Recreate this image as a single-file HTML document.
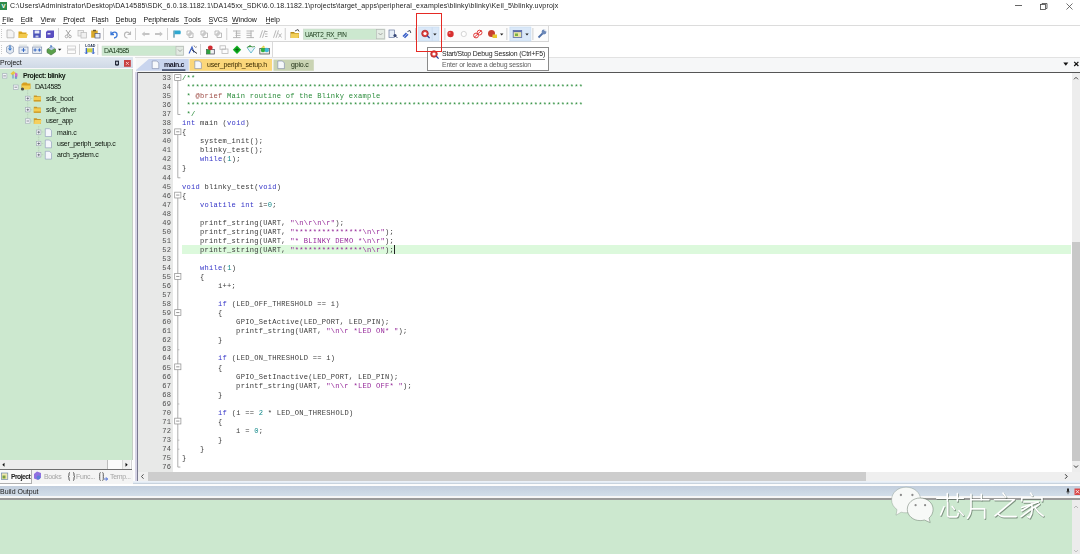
<!DOCTYPE html>
<html><head><meta charset="utf-8">
<style>
*{margin:0;padding:0;box-sizing:border-box}
html,body{width:1080px;height:554px;overflow:hidden;background:#fff}
body{position:relative;font-family:"Liberation Sans",sans-serif;color:#000}
.a{position:absolute}
.ui{will-change:transform;font-family:"Liberation Sans",sans-serif;font-size:6.9px;line-height:8px;white-space:nowrap}
#title{left:10.4px;top:2.1px;color:#1a1a1a;font-size:7px;letter-spacing:0.167px}
.menu > span{position:absolute;top:16.2px;font-size:7px;color:#111}
.u{position:relative}.u::after{content:"";position:absolute;left:0.2px;right:0.2px;top:7.2px;height:0.7px;background:#666}
pre{will-change:transform;font-family:"Liberation Mono",monospace;font-size:7.1px;letter-spacing:0.253px;line-height:9.04px;margin:0}
.c{color:#2a8c3a}
.d{color:#a0504a}
.k{color:#3636c8}
.s{color:#962a9a}
.n{color:#138a8a}
.sep{position:absolute;width:1px;background:#c8c8c8}
</style></head><body>

<!-- title bar -->
<div class="a" style="left:0;top:2px;width:7px;height:8px;background:#2e8b4a"></div>
<div class="a" style="left:1.5px;top:3px;width:4px;height:6px;color:#fff;font-size:6px;line-height:6px;font-weight:bold;font-family:'Liberation Sans'">V</div>
<div id="title" class="a ui">C:\Users\Administrator\Desktop\DA14585\SDK_6.0.18.1182.1\DA145xx_SDK\6.0.18.1182.1\projects\target_apps\peripheral_examples\blinky\blinky\Keil_5\blinky.uvprojx</div>
<!-- window controls -->
<div class="a" style="left:1015px;top:5.3px;width:6.8px;height:0.8px;background:#666"></div>
<svg class="a" style="left:1040px;top:2.5px" width="8" height="7"><rect x="0.5" y="1.5" width="5" height="5" fill="none" stroke="#444" stroke-width="0.8"/><path d="M2 1.5V0.5h5v5h-1" fill="none" stroke="#444" stroke-width="0.8"/></svg>
<svg class="a" style="left:1066px;top:2.5px" width="8" height="7"><path d="M0.5 0.5L6.5 6.5M6.5 0.5L0.5 6.5" stroke="#444" stroke-width="0.75"/></svg>

<!-- menu -->
<div class="menu ui">
<span style="left:2.3px"><span class="u">F</span>ile</span>
<span style="left:20.7px"><span class="u">E</span>dit</span>
<span style="left:40.4px"><span class="u">V</span>iew</span>
<span style="left:63.2px"><span class="u">P</span>roject</span>
<span style="left:91.5px">Fl<span class="u">a</span>sh</span>
<span style="left:115.5px"><span class="u">D</span>ebug</span>
<span style="left:143.6px">Pe<span class="u">r</span>ipherals</span>
<span style="left:184px"><span class="u">T</span>ools</span>
<span style="left:208.5px"><span class="u">S</span>VCS</span>
<span style="left:232px"><span class="u">W</span>indow</span>
<span style="left:265.4px"><span class="u">H</span>elp</span>
</div>
<div class="a" style="left:0;top:25px;width:1080px;height:1px;background:#dcdcdc"></div>

<!-- toolbar 1 -->
<div class="a" style="left:0;top:26px;width:549px;height:15.5px;background:#fcfcfc;border-right:1px solid #dadada"></div>
<div class="a" style="left:0;top:41px;width:549px;height:1px;background:#d6d6d6"></div>
<!-- toolbar 2 -->
<div class="a" style="left:0;top:42px;width:273px;height:15px;background:#fcfcfc;border-right:1px solid #dadada"></div>

<svg class="a" style="left:0;top:0" width="560" height="60" viewBox="0 0 560 60">
<!-- grippers -->
<g fill="#cacaca"><rect x="1" y="29" width="1" height="1"/><rect x="1" y="31" width="1" height="1"/><rect x="1" y="33" width="1" height="1"/><rect x="1" y="35" width="1" height="1"/><rect x="1" y="37" width="1" height="1"/>
<rect x="1" y="45" width="1" height="1"/><rect x="1" y="47" width="1" height="1"/><rect x="1" y="49" width="1" height="1"/><rect x="1" y="51" width="1" height="1"/><rect x="1" y="53" width="1" height="1"/></g>
<!-- separators tb1 -->
<g fill="#c4c4c4">
<rect x="58" y="28" width="0.8" height="12"/><rect x="103" y="28" width="0.8" height="12"/><rect x="135" y="28" width="0.8" height="12"/><rect x="167.2" y="28" width="0.8" height="12"/><rect x="226.4" y="28" width="0.8" height="12"/><rect x="284.8" y="28" width="0.8" height="12"/><rect x="415.2" y="28" width="0.8" height="12"/><rect x="444.5" y="28" width="0.8" height="12"/><rect x="506.5" y="28" width="0.8" height="12"/><rect x="532.5" y="28" width="0.8" height="12"/>
<rect x="79.2" y="44" width="0.8" height="11"/><rect x="97.4" y="44" width="0.8" height="11"/><rect x="200.2" y="44" width="0.8" height="11"/>
</g>
<!-- TB1 icons -->
<!-- new -->
<path d="M7 30h4.5l2.5 2.5v5.3H7z" fill="#f4f4f4" stroke="#a8a8a8" stroke-width="0.7"/>
<!-- open -->
<path d="M18.5 31.5h3l1 1h4v5.5h-8z" fill="#d9a520"/><path d="M19.5 34h8.5l-1.5 4h-7.5z" fill="#f2c94c"/>
<!-- save -->
<rect x="33.2" y="30" width="7.6" height="7.8" fill="#4a52b8"/><rect x="34.6" y="30.5" width="4.8" height="3" fill="#e8ecf8"/><rect x="35.5" y="35.5" width="3" height="2" fill="#c8cce8"/>
<!-- save all -->
<path d="M47.5 30.5h6.5v6.5l-1.5 1h-6.5v-6z" fill="#5a4ec0"/><rect x="47.5" y="33" width="3" height="1.5" fill="#e0e0f4"/>
<!-- cut -->
<path d="M66 30l3.5 5M70.5 30l-3.5 5" stroke="#9a9a9a" stroke-width="0.9"/><circle cx="66.5" cy="36.5" r="1.3" fill="none" stroke="#9a9a9a" stroke-width="0.8"/><circle cx="70" cy="36.5" r="1.3" fill="none" stroke="#9a9a9a" stroke-width="0.8"/>
<!-- copy -->
<rect x="78" y="30.5" width="5.5" height="5.5" fill="#f0f0f0" stroke="#b8b8b8" stroke-width="0.7"/><rect x="81" y="32.5" width="5.5" height="5.5" fill="#f0f0f0" stroke="#b8b8b8" stroke-width="0.7"/>
<!-- paste -->
<rect x="91.2" y="30.5" width="6.5" height="7.2" fill="#d9a828"/><rect x="93" y="29.8" width="3" height="1.5" fill="#6a5a30"/><rect x="95" y="33.5" width="5" height="4.5" fill="#e8eef6" stroke="#505878" stroke-width="0.7"/>
<!-- undo -->
<path d="M111 31.5v3h3M111.5 34.2c1.5-3 6-3 5.5 1.5 -0.5 2 -2 2.3 -3 2.3" fill="none" stroke="#3a78d8" stroke-width="1.3"/>
<!-- redo -->
<path d="M130.5 31.5v3h-3M130 34.2c-1.5-3 -6-3 -5.5 1.5 0.5 2 2 2.3 3 2.3" fill="none" stroke="#b8b8b8" stroke-width="1.1"/>
<!-- back / fwd -->
<path d="M141.7 34l3-2.5v1.6h4.8v1.8h-4.8v1.6z" fill="#c4c4c4"/><path d="M162.8 34l-3-2.5v1.6h-4.8v1.8h4.8v1.6z" fill="#c4c4c4"/>
<!-- bookmark flag -->
<path d="M174 30.5v7.2" stroke="#1a6c8c" stroke-width="1"/><path d="M174.5 30.5h5.5c1 0 1 3.8 0 3.8h-5.5z" fill="#2ea8d0"/>
<!-- gray bookmarks -->
<g fill="none" stroke="#b4b4b4" stroke-width="0.9"><path d="M187 31h4v4h-4zM189 33h4v4.5h-4z"/><path d="M201 31h4v4h-4zM203 33h4.5v4.5h-4.5z"/><path d="M215 31h4v4h-4zM217 33h4.5v4.5h-4.5z"/></g>
<!-- indent / unindent -->
<g stroke="#b0b0b0" stroke-width="0.9"><path d="M233 31h7.5M235.5 33.2h5M235.5 35.4h5M233 37.6h7.5M236.5 30.5v7.5"/><path d="M246.5 31h7.5M246.5 33.2h5M246.5 35.4h5M246.5 37.6h7.5M251 30.5v7.5"/></g>
<!-- comment // -->
<g stroke="#b0b0b0" stroke-width="0.9"><path d="M260 37.8l2.5-7.5M262.5 37.8l2.5-7.5M265 31.5h2.5M265 34h2.5M265 36.5h2.5"/><path d="M273.5 37.8l2.5-7.5M276 37.8l2.5-7.5M278.5 33.5l3 4M281.5 33.5l-3 4"/></g>
<!-- folder -->
<path d="M290.5 32h3.5l1 1h4v5h-8.5z" fill="#b88a18"/><path d="M291 33.5h8l-0.5 4.5h-7.5z" fill="#f2cf5a"/><path d="M295 31l3-1.5 1 2" fill="none" stroke="#303030" stroke-width="0.8"/>
<!-- combobox UART2 -->
<rect x="303.3" y="29" width="81.7" height="10.4" fill="#cce8cf" stroke="#c8d4c8" stroke-width="0.5"/>
<rect x="376.5" y="29.6" width="8" height="9.2" fill="#e4ece4" stroke="#b4b4b4" stroke-width="0.6"/>
<path d="M378.5 33l2 2 2-2" fill="none" stroke="#8a8a8a" stroke-width="0.7"/>
<!-- doc magnifier -->
<rect x="389" y="30" width="5.5" height="7.5" fill="#e6eef8" stroke="#6a7aa0" stroke-width="0.7"/><circle cx="395" cy="35.5" r="1.6" fill="#384878"/><path d="M396 36.5l1.3 1.3" stroke="#203060" stroke-width="1"/>
<!-- arrows -->
<path d="M403 36.5l3.5-3.5M404.5 37.8l3.5-3.5" stroke="#3a60c8" stroke-width="1.6"/><path d="M407.5 31.5l2.5-1 0.8 2.5" fill="none" stroke="#303848" stroke-width="0.9"/>
<!-- debug button highlight -->
<rect x="418.6" y="27" width="20.4" height="14" fill="#dae8f8" stroke="#c4daf2" stroke-width="0.6"/>
<rect x="431.8" y="27.3" width="0.6" height="13.4" fill="#c0d4ec"/>
<circle cx="425" cy="33.5" r="3.3" fill="#e04040" stroke="#a02020" stroke-width="0.7"/><circle cx="425" cy="33.5" r="1.6" fill="#fff"/><path d="M427.3 35.8l2.3 2.3" stroke="#2a3a98" stroke-width="1.3"/>
<path d="M433.2 33.6h3.4l-1.7 2z" fill="#222"/>
<!-- red circle -->
<circle cx="450.5" cy="34" r="3.2" fill="#d83030"/><circle cx="449.6" cy="33" r="1" fill="#f08080"/>
<!-- hollow circle -->
<circle cx="463.8" cy="34" r="2.6" fill="#fff" stroke="#c4c4c4" stroke-width="0.7"/>
<!-- chain -->
<g fill="none" stroke="#e03a3a" stroke-width="1"><circle cx="476" cy="35.5" r="2.4"/><circle cx="479.6" cy="32.6" r="2.4"/><path d="M474 37.5l7.5-7"/></g>
<!-- bug -->
<circle cx="491.5" cy="33.5" r="3.5" fill="#c84030"/><rect x="492.5" y="34.5" width="4.5" height="3.5" fill="#e8c830"/><path d="M500 33.6h3.4l-1.7 2z" fill="#222"/>
<!-- window highlight -->
<rect x="509.9" y="27" width="21" height="14" fill="#dae8f8" stroke="#c4daf2" stroke-width="0.6"/>
<rect x="513.2" y="30.5" width="8.5" height="7" fill="#e8e4a8" stroke="#5a6aa8" stroke-width="0.8"/><rect x="513.2" y="30.5" width="8.5" height="1.6" fill="#5a6aa8"/><rect x="515" y="33.5" width="3" height="2.5" fill="#7ab040"/>
<path d="M525.3 33.6h3.4l-1.7 2z" fill="#222"/>
<!-- wrench -->
<path d="M538.5 37.5l4.5-4.5" stroke="#5070a8" stroke-width="1.8"/><circle cx="544" cy="32" r="2.4" fill="#6c88b8"/><path d="M544.3 29.6l1.5 1.6" stroke="#f9f9f9" stroke-width="1.1"/>

<!-- TB2 icons -->
<path d="M6.5 47l3.5-2 3.5 2v5l-3.5 2-3.5-2z" fill="#dfe6f0" stroke="#8898b0" stroke-width="0.7"/><path d="M10 45.5v4.5" stroke="#2a70c8" stroke-width="1.2"/><path d="M8.5 48.5l1.5 1.8 1.5-1.8" fill="none" stroke="#2a70c8" stroke-width="0.9"/>
<rect x="19" y="47" width="9" height="6.5" fill="#e6ecf4" stroke="#7a8aa8" stroke-width="0.7"/><path d="M20 46v-1.5M22 46v-1.5M24 46v-1.5M26 46v-1.5" stroke="#9aa" stroke-width="0.5"/><path d="M21.5 50h4M23.5 48v4" stroke="#2a60c0" stroke-width="0.9"/>
<rect x="32.7" y="47" width="9" height="6.5" fill="#e6ecf4" stroke="#7a8aa8" stroke-width="0.7"/><path d="M34 46v-1.5M36 46v-1.5M38 46v-1.5M40 46v-1.5" stroke="#9aa" stroke-width="0.5"/><path d="M33.5 50h3.2M35.1 48.4v3.2M37.8 50h3.2M39.4 48.4v3.2" stroke="#2a60c0" stroke-width="0.9"/>
<path d="M47 49.5l4.5-3 4 2.5v3l-4.5 3-4-2.5z" fill="#5aa04a" stroke="#40703a" stroke-width="0.6"/><path d="M48.5 48.5l3.5-2.3 3 1.8-3.5 2.3z" fill="#b8c8e8"/><path d="M51 45v2.5" stroke="#2a60c8" stroke-width="1"/><path d="M58 48.8h3.4l-1.7 2z" fill="#222"/>
<g fill="none" stroke="#c8c8c8" stroke-width="0.8"><rect x="67.5" y="46" width="8" height="3"/><rect x="67.5" y="50" width="8" height="3.5"/></g>
<!-- LOAD -->
<text x="85.2" y="47.3" font-family="Liberation Sans" font-size="3.6" font-weight="bold" fill="#203050">LOAD</text><rect x="87" y="48.3" width="5.5" height="4" fill="#c8d040"/><path d="M86.3 48v5M93.2 48v5" stroke="#2a5ac8" stroke-width="1.2"/><path d="M85 52.5l1.3 1.5 1.3-1.5M92 52.5l1.3 1.5 1.3-1.5" fill="none" stroke="#2a5ac8" stroke-width="0.9"/>
<!-- combobox DA14585 -->
<rect x="102" y="46" width="81.8" height="9.5" fill="#cce8cf" stroke="#c8d8c8" stroke-width="0.5"/>
<rect x="176" y="46.5" width="7.6" height="8.6" fill="#e2eae2" stroke="#b4b4b4" stroke-width="0.6"/>
<path d="M178 49.5l2 2 2-2" fill="none" stroke="#8a8a8a" stroke-width="0.7"/>
<!-- wand -->
<path d="M189 53.5l3-6.5 2 5.5" fill="none" stroke="#3a60c8" stroke-width="1.1"/><path d="M191.5 49.5l5.5 4" stroke="#222" stroke-width="0.9"/><path d="M194 45.5l1 1.5M196.5 46.5l-1 1.5" stroke="#333" stroke-width="0.6"/>
<!-- tb2 right icons -->
<rect x="206.5" y="49.5" width="7.8" height="4.5" fill="#f0f0f0" stroke="#404050" stroke-width="0.7"/><rect x="206.5" y="49.5" width="3.9" height="4.5" fill="#30a040"/><circle cx="210.3" cy="47.8" r="2.4" fill="#d02a30"/>
<g fill="none" stroke="#b8b8b8" stroke-width="0.8"><rect x="220" y="45.8" width="5.5" height="3.5"/><rect x="222" y="49" width="6" height="4.5"/></g>
<path d="M237 45.5l4.2 4.2-4.2 4.2-4.2-4.2z" fill="#10b020"/><path d="M237 47.5v4.5M234.8 49.7h4.4" stroke="#0a5010" stroke-width="0.7"/>
<path d="M247 47.5l4 5.5 4-5.5" fill="#e8f4f8" stroke="#50b0c8" stroke-width="0.8"/><path d="M247 47.5l3-2 2 1.5 3-0.5" fill="#40a848" stroke="#2a7a30" stroke-width="0.7"/>
<rect x="259.8" y="48.5" width="9.6" height="5.5" fill="#f0f0e8" stroke="#404040" stroke-width="0.7"/><circle cx="263" cy="50" r="2.3" fill="#30b040"/><circle cx="266.8" cy="50" r="2.2" fill="#40b8d8"/><path d="M261 48l2.5-2.5 2 2" fill="#e0d040"/>
</svg>
<div class="a ui" style="left:304.7px;top:30.9px;font-size:6.4px;letter-spacing:-0.52px;color:#1a3a1a">UART2_RX_PIN</div>
<div class="a ui" style="left:103.8px;top:46.9px;font-size:6.9px;letter-spacing:-0.55px;color:#1a3a1a">DA14585</div>


<!-- project panel -->
<div class="a" style="left:0;top:57px;width:133px;height:10.6px;background:linear-gradient(#e0e7f0,#cfd9e6)"></div>
<div class="a ui" style="left:0;top:58.5px;font-size:7px;color:#111">Project</div>
<div class="a" style="left:0;top:67.6px;width:133px;height:1.6px;background:#f8f8f8"></div>
<div class="a" style="left:0;top:69.2px;width:133px;height:390.8px;background:#cce8cf"></div>
<div class="a" style="left:131.9px;top:69px;width:1.2px;height:391px;background:#c4cec4"></div>

<!-- editor -->
<div class="a" style="left:133px;top:57px;width:947px;height:429px;background:#fcfcfc"></div>
<div class="a" style="left:136px;top:57px;width:944px;height:15px;background:#f6f7f8"></div>
<div class="a" style="left:137px;top:72px;width:935px;height:400px;background:#fff"></div>
<div class="a" style="left:137px;top:72px;width:36px;height:400px;background:#e8e9e8"></div>
<div class="a" style="left:136.5px;top:71.5px;width:944px;height:1.2px;background:#555"></div>
<div class="a" style="left:135.3px;top:72px;width:1.7px;height:409px;background:#d6d4e6"></div>
<div class="a" style="left:137px;top:71.5px;width:1.4px;height:409.5px;background:#7a7a90"></div>

<!-- highlight line 52 -->
<div class="a" style="left:182px;top:244.8px;width:889px;height:9.1px;background:#dcf9dc"></div>

<svg class="a" style="left:0;top:0" width="200" height="480"><path d="M177.8 80.45V114.51" stroke="#8c8c8c" stroke-width="0.7"/><path d="M177.8 114.51h2.6" stroke="#8c8c8c" stroke-width="0.7"/><rect x="174.7" y="74.65" width="6.2" height="5.8" fill="#fff" stroke="#8c8c8c" stroke-width="0.7"/><path d="M176.2 77.55h3.2" stroke="#666" stroke-width="0.7"/><path d="M177.8 134.69V177.79" stroke="#8c8c8c" stroke-width="0.7"/><path d="M177.8 177.79h2.6" stroke="#8c8c8c" stroke-width="0.7"/><rect x="174.7" y="128.89" width="6.2" height="5.8" fill="#fff" stroke="#8c8c8c" stroke-width="0.7"/><path d="M176.2 131.79h3.2" stroke="#666" stroke-width="0.7"/><path d="M177.8 197.97V467.07" stroke="#8c8c8c" stroke-width="0.7"/><path d="M177.8 467.07h2.6" stroke="#8c8c8c" stroke-width="0.7"/><rect x="174.7" y="192.17" width="6.2" height="5.8" fill="#fff" stroke="#8c8c8c" stroke-width="0.7"/><path d="M176.2 195.07h3.2" stroke="#666" stroke-width="0.7"/><rect x="174.7" y="273.53" width="6.2" height="5.8" fill="#fff" stroke="#8c8c8c" stroke-width="0.7"/><path d="M176.2 276.43h3.2" stroke="#666" stroke-width="0.7"/><rect x="174.7" y="309.69" width="6.2" height="5.8" fill="#fff" stroke="#8c8c8c" stroke-width="0.7"/><path d="M176.2 312.59h3.2" stroke="#666" stroke-width="0.7"/><rect x="174.7" y="363.93" width="6.2" height="5.8" fill="#fff" stroke="#8c8c8c" stroke-width="0.7"/><path d="M176.2 366.83h3.2" stroke="#666" stroke-width="0.7"/><rect x="174.7" y="418.17" width="6.2" height="5.8" fill="#fff" stroke="#8c8c8c" stroke-width="0.7"/><path d="M176.2 421.07h3.2" stroke="#666" stroke-width="0.7"/><path d="M177.8 349.75h1.6" stroke="#9c9c9c" stroke-width="0.6"/><path d="M177.8 403.99h1.6" stroke="#9c9c9c" stroke-width="0.6"/><path d="M177.8 440.15h1.6" stroke="#9c9c9c" stroke-width="0.6"/><path d="M177.8 449.19h1.6" stroke="#9c9c9c" stroke-width="0.6"/></svg>
<pre class="a" style="left:148px;top:74.4px;width:23.2px;text-align:right;color:#505050">33
34
35
36
37
38
39
40
41
42
43
44
45
46
47
48
49
50
51
52
53
54
55
56
57
58
59
60
61
62
63
64
65
66
67
68
69
70
71
72
73
74
75
76</pre>
<pre class="a" style="left:182px;top:74.4px;color:#3a3a3a"><span class="c">/**</span>
<span class="c"> ****************************************************************************************</span>
<span class="c"> * </span><span class="d">@brief</span><span class="c"> Main routine of the Blinky example</span>
<span class="c"> ****************************************************************************************</span>
<span class="c"> */</span>
<span class="k">int</span> main (<span class="k">void</span>)
{
    system_init();
    blinky_test();
    <span class="k">while</span>(<span class="n">1</span>);
}

<span class="k">void</span> blinky_test(<span class="k">void</span>)
{
    <span class="k">volatile</span> <span class="k">int</span> i=<span class="n">0</span>;

    printf_string(UART, <span class="s">&quot;\n\r\n\r&quot;</span>);
    printf_string(UART, <span class="s">&quot;***************\n\r&quot;</span>);
    printf_string(UART, <span class="s">&quot;* BLINKY DEMO *\n\r&quot;</span>);
    printf_string(UART, <span class="s">&quot;***************\n\r&quot;</span>);

    <span class="k">while</span>(<span class="n">1</span>)
    {
        i++;

        <span class="k">if</span> (LED_OFF_THRESHOLD == i)
        {
            GPIO_SetActive(LED_PORT, LED_PIN);
            printf_string(UART, <span class="s">&quot;\n\r *LED ON* &quot;</span>);
        }

        <span class="k">if</span> (LED_ON_THRESHOLD == i)
        {
            GPIO_SetInactive(LED_PORT, LED_PIN);
            printf_string(UART, <span class="s">&quot;\n\r *LED OFF* &quot;</span>);
        }

        <span class="k">if</span> (i == <span class="n">2</span> * LED_ON_THRESHOLD)
        {
            i = <span class="n">0</span>;
        }
    }
}
</pre>

<div class="a" style="left:394.2px;top:245px;width:0.8px;height:9px;background:#222"></div>
<!-- v scrollbar -->
<div class="a" style="left:1072px;top:72.8px;width:8px;height:399.2px;background:#ededed"></div>
<div class="a" style="left:1072px;top:242px;width:8px;height:219.3px;background:#c8c8c8"></div>
<!-- h scrollbar -->
<div class="a" style="left:137.5px;top:472px;width:942.5px;height:8.5px;background:#efefef"></div>
<div class="a" style="left:148px;top:472px;width:717.5px;height:8.5px;background:#cdcdcd"></div>
<div class="a" style="left:133px;top:480.5px;width:947px;height:3px;background:linear-gradient(#f0f4fa,#dfe8f2 60%,#b8c4d0)"></div>

<!-- left panel bottom -->
<div class="a" style="left:0;top:460px;width:132.3px;height:10px;background:#d4d4d4"></div>
<div class="a" style="left:0;top:460px;width:130.5px;height:8.6px;background:#fafafa"></div>
<div class="a" style="left:0;top:460px;width:8.5px;height:8.6px;background:#ededed"></div>
<div class="a" style="left:9px;top:460px;width:98.6px;height:8.6px;background:#ececec;border-right:1px solid #bdbdbd"></div>
<div class="a" style="left:122.2px;top:460px;width:8.3px;height:8.6px;background:#efefef;border-left:0.6px solid #d8d8d8"></div>
<div class="a" style="left:0;top:468.6px;width:132.3px;height:1.4px;background:#6e6e6e"></div>
<div class="a" style="left:0;top:469.5px;width:133px;height:14px;background:#f4f4f4"></div>

<!-- build output -->
<div class="a" style="left:0;top:486px;width:1080px;height:10.2px;background:linear-gradient(#c2cedd,#d2dee9)"></div>
<div class="a ui" style="left:0;top:487.5px;font-size:7px;color:#222">Build Output</div>
<div class="a" style="left:0;top:496.2px;width:1080px;height:2.2px;background:#f6f6f6"></div>
<div class="a" style="left:0;top:498.4px;width:1080px;height:1.2px;background:#9a9a9a"></div>
<div class="a" style="left:0;top:499.6px;width:1072px;height:55px;background:#cce8cf"></div>
<div class="a" style="left:1072px;top:499.6px;width:8px;height:55px;background:#ececec"></div>

<!-- project panel header icons -->
<svg class="a" style="left:112px;top:57px" width="21" height="12">
<rect x="3.6" y="4.2" width="2.8" height="3.6" fill="none" stroke="#1a2030" stroke-width="1.1"/><rect x="4.4" y="8" width="1.2" height="0.8" fill="#1a2030"/>
<rect x="12" y="3" width="6.8" height="6.8" fill="#c84040"/><path d="M14 5l2.8 2.8M16.8 5l-2.8 2.8" stroke="#f4d0d0" stroke-width="0.9"/>
</svg>
<!-- tree lines -->
<svg class="a" style="left:0;top:68px" width="133" height="100">
<g stroke="#a8b8a8" stroke-width="0.6" stroke-dasharray="0.8 0.8" fill="none">
<path d="M4.5 10.5v0M15.7 21v-2M15.7 22.5v0M27.7 22v31M27.7 30.5h5M27.7 41.8h5M27.7 53h5M38.7 58v31M38.7 64h5M38.7 75.5h5M38.7 86.7h5"/>
</g>
<!-- expanders -->
<g fill="#f4f6f8" stroke="#a0a8b8" stroke-width="0.6">
<rect x="2.3" y="5.7" width="4.6" height="4.4"/><rect x="13.5" y="17" width="4.6" height="4.4"/><rect x="25.5" y="28.2" width="4.5" height="4.4"/><rect x="25.5" y="39.5" width="4.5" height="4.4"/><rect x="25.5" y="50.8" width="4.5" height="4.4"/>
<rect x="36.5" y="62" width="4.4" height="4.4"/><rect x="36.5" y="73.3" width="4.4" height="4.4"/><rect x="36.5" y="84.6" width="4.4" height="4.4"/>
</g>
<g stroke="#404858" stroke-width="0.6">
<path d="M3.3 7.9h2.6M14.5 19.2h2.6M26.5 53h2.5M26.5 30.4h2.5M27.75 29.2v2.5M26.5 41.7h2.5M27.75 40.5v2.5M37.4 64.2h2.6M38.7 63v2.6M37.4 75.5h2.6M38.7 74.3v2.6M37.4 86.8h2.6M38.7 85.6v2.6"/>
</g>
<!-- project icon -->
<path d="M10.5 5.5l3-2.5 2 2-3 2.5z" fill="#e8c840"/><path d="M15 4.5l2.5 1v3l-2.5 1z" fill="#d070c8"/><path d="M14 9.5l2 1 2-1-2 1.5z" fill="#3a90d8"/><path d="M13 6.5v4" stroke="#5a8ad0" stroke-width="1"/><path d="M16 8.5v2" stroke="#5070c0" stroke-width="1.2"/>
<!-- DA14585 open folder w/ gear -->
<path d="M21.5 16l2-1.5h3l1 1h3v5.5h-9z" fill="#d8a020"/><path d="M22 17.5h8.5l-1 4h-7.5z" fill="#f5cf50"/><circle cx="22.5" cy="21" r="1.6" fill="#505048"/>
<!-- folders -->
<g><path d="M33.8 27.5h2.8l0.8 0.8h3.4v5h-7z" fill="#c89828"/><rect x="33.8" y="29" width="7" height="4.3" fill="#f4cc50"/><rect x="33.8" y="32.3" width="7" height="1" fill="#c08a18"/></g>
<g transform="translate(0 11.3)"><path d="M33.8 27.5h2.8l0.8 0.8h3.4v5h-7z" fill="#c89828"/><rect x="33.8" y="29" width="7" height="4.3" fill="#f4cc50"/><rect x="33.8" y="32.3" width="7" height="1" fill="#c08a18"/></g>
<g><path d="M33.8 50.2h2.8l0.8 0.8h3.4v5h-7z" fill="#c89828"/><path d="M34.5 52h7l-1 3.9h-6.5z" fill="#f5d060"/></g>
<!-- file icons -->
<g fill="#f4f6fb" stroke="#8a96b8" stroke-width="0.6">
<path d="M45.3 60.7h4.2l2 2v5.8h-6.2z"/><path d="M45.3 72h4.2l2 2v5.8h-6.2z"/><path d="M45.3 83.3h4.2l2 2v5.8h-6.2z"/>
</g>
</svg>
<div class="a ui" style="left:23.4px;top:71.5px;font-size:7px;font-weight:bold;letter-spacing:-0.4px;color:#0e160e">Project: blinky</div>
<div class="a ui" style="left:34.8px;top:82.8px;font-size:7px;letter-spacing:-0.5px;color:#0e160e">DA14585</div>
<div class="a ui" style="left:45.6px;top:94.6px;font-size:7px;letter-spacing:-0.15px;color:#0e160e">sdk_boot</div>
<div class="a ui" style="left:45.6px;top:105.9px;font-size:7px;letter-spacing:-0.2px;color:#0e160e">sdk_driver</div>
<div class="a ui" style="left:45.6px;top:117.3px;font-size:7px;letter-spacing:-0.32px;color:#0e160e">user_app</div>
<div class="a ui" style="left:57.2px;top:128.7px;font-size:7px;letter-spacing:-0.15px;color:#0e160e">main.c</div>
<div class="a ui" style="left:57.2px;top:140px;font-size:7px;letter-spacing:-0.26px;color:#0e160e">user_periph_setup.c</div>
<div class="a ui" style="left:57.2px;top:151.4px;font-size:7px;letter-spacing:-0.28px;color:#0e160e">arch_system.c</div>

<!-- tab strip -->
<div class="a" style="left:135px;top:57px;width:945px;height:1px;background:#e2e2e2"></div>
<svg class="a" style="left:130px;top:54px" width="200" height="20">
<path d="M6 16L18.8 5H58.75V16.8H6z" fill="#c9d5ee"/>
<rect x="59.6" y="5" width="82.4" height="11.8" fill="#fbd77a"/>
<rect x="143.5" y="5.6" width="40.3" height="11.2" fill="#c9d3b3"/>
<g fill="#f6f8fb" stroke="#7a86a8" stroke-width="0.6">
<path d="M22.2 7h4.6l2 2v5.6h-6.6z"/><path d="M64.8 7h4.6l2 2v5.6h-6.6z"/><path d="M147.8 7h4.6l2 2v5.6h-6.6z"/>
</g>
<rect x="32" y="15.4" width="23.4" height="1.3" fill="#1c2848"/>
</svg>
<div class="a ui" style="left:164px;top:61.2px;font-size:7px;font-weight:bold;letter-spacing:-0.35px;color:#1a1a2a">main.c</div>
<div class="a ui" style="left:207px;top:61.2px;font-size:7px;letter-spacing:-0.2px;color:#3a2a00">user_periph_setup.h</div>
<div class="a ui" style="left:290.9px;top:61.2px;font-size:7px;letter-spacing:-0.2px;color:#1a2a10">gpio.c</div>
<svg class="a" style="left:1060px;top:58px" width="20" height="12">
<path d="M3.3 4.5h5l-2.5 3.3z" fill="#111"/><path d="M14.2 3.8l4.2 4.2M18.4 3.8l-4.2 4.2" stroke="#111" stroke-width="1.2"/>
</svg>
<!-- editor scroll arrows -->
<svg class="a" style="left:1072px;top:72px" width="8" height="400"><path d="M2 7.3l2-2 2 2" fill="none" stroke="#404040" stroke-width="0.95"/><path d="M2 393.5l2 2 2-2" fill="none" stroke="#303030" stroke-width="1"/></svg>
<svg class="a" style="left:137px;top:472px" width="935" height="9"><path d="M6.5 2.3l-2 2.2 2 2.2" fill="none" stroke="#404040" stroke-width="0.9"/><path d="M928.2 2.3l2 2.2-2 2.2" fill="none" stroke="#303030" stroke-width="1"/></svg>
<svg class="a" style="left:0;top:460px" width="133" height="10"><path d="M4.5 2.8v4l-2.2-2z" fill="#111"/><path d="M125.5 2.8v4l2.2-2z" fill="#111"/></svg>

<!-- left panel tabs -->
<div class="a" style="left:0;top:470px;width:31.7px;height:13.5px;background:#fafafa;border-right:1px solid #b0b0b0;border-bottom:1px solid #b0b0b0"></div>
<svg class="a" style="left:0;top:470px" width="133" height="14">
<rect x="1.3" y="3" width="6.5" height="6.5" fill="#f0e8b0" stroke="#5a7aa8" stroke-width="0.6"/><rect x="2.5" y="5.5" width="3" height="3" fill="#7aa040"/>
<path d="M34 4l3-2.5 4 1.5v4.5l-3 2.5-4-1.5z" fill="#9070e0"/><circle cx="38.5" cy="7.5" r="2" fill="#5a80d8"/>
<path d="M70 2.5c-1 0-1 1-1 2.5s-0.8 1.5-0.8 1.5 0.8 0 0.8 1.5 0 2.5 1 2.5M73 2.5c1 0 1 1 1 2.5s0.8 1.5 0.8 1.5-0.8 0-0.8 1.5 0 2.5-1 2.5" fill="none" stroke="#303030" stroke-width="0.8"/>
<path d="M100.5 2.5c-0.8 0-0.8 1-0.8 4s0 4 0.8 4M102.5 2.5c0.8 0 0.8 1 0.8 4s0 4-0.8 4" fill="none" stroke="#303030" stroke-width="0.8"/><path d="M104 9h3.5M106 7.3l1.5 1.7-1.5 1.7" fill="none" stroke="#3a60d0" stroke-width="0.9"/>
</svg>
<div class="a ui" style="left:10.8px;top:473.3px;font-size:6.8px;font-weight:bold;letter-spacing:-0.55px;color:#222">Project</div>
<div class="a ui" style="left:43.7px;top:473.3px;font-size:7px;letter-spacing:-0.45px;color:#a4a4a4">Books</div>
<div class="a ui" style="left:76.4px;top:473.3px;font-size:7px;letter-spacing:-0.35px;color:#a4a4a4">Func...</div>
<div class="a ui" style="left:109.7px;top:473.3px;font-size:7px;letter-spacing:-0.35px;color:#a4a4a4">Temp...</div>

<!-- build output header icons -->
<svg class="a" style="left:1060px;top:486px" width="20" height="12">
<rect x="7" y="2.5" width="2" height="3.2" fill="#222"/><rect x="6.4" y="5.5" width="3.2" height="0.8" fill="#222"/><rect x="7.7" y="6.2" width="0.6" height="2" fill="#222"/>
<rect x="14.5" y="2.5" width="6" height="6.5" fill="#d84848"/><path d="M15.8 4l3.4 3.4M19.2 4l-3.4 3.4" stroke="#fff" stroke-width="0.8"/>
</svg>
<svg class="a" style="left:1072px;top:499px" width="8" height="55"><path d="M2 9l2-2 2 2" fill="none" stroke="#a0a0a0" stroke-width="0.7"/><path d="M2 51l2 2 2-2" fill="none" stroke="#b0b0b0" stroke-width="0.7"/></svg>

<!-- tooltip -->
<div class="a" style="left:426.5px;top:47.3px;width:122.5px;height:23.5px;background:#fff;border:0.8px solid #8a8a8a"></div>
<svg class="a" style="left:428px;top:49px" width="14" height="12"><circle cx="6" cy="5" r="3.3" fill="#e04040" stroke="#a02020" stroke-width="0.7"/><circle cx="6" cy="5" r="1.6" fill="#fff"/><path d="M8.3 7.3l2.3 2.3" stroke="#2a3a98" stroke-width="1.3"/></svg>
<div class="a ui" style="left:442px;top:50.2px;font-size:6.9px;letter-spacing:-0.16px;color:#222">Start/Stop Debug Session (Ctrl+F5)</div>
<div class="a" style="left:442px;top:59.2px;width:103px;height:0.8px;background:#8a8a8a"></div>
<div class="a ui" style="left:442px;top:61px;font-size:6.9px;letter-spacing:-0.2px;color:#606060">Enter or leave a debug session</div>
<!-- red rectangle -->
<div class="a" style="left:416.2px;top:13.2px;width:25.6px;height:38.9px;border:1.9px solid #e52a24"></div>
<svg class="a" style="left:880px;top:482px" width="170" height="45" viewBox="880 482 170 45">
<defs>
<g id="chars" fill="none" stroke-linecap="round" stroke-linejoin="round">
<!-- 芯 -->
<path d="M936.8 498.2H963.4"/>
<path d="M947.3 493.6V501M957.4 493.6V501"/>
<path d="M944 506.8L940.6 515"/>
<path d="M947.7 502V515.2Q947.7 516.8 949.5 516.8H956.5Q958 516.8 958.2 513.5"/>
<path d="M952.2 506.5L954.4 509.5"/>
<path d="M959 510.7L963.2 515.3"/>
<!-- 片 -->
<path d="M971 494.2V508Q971 514 967.5 518.2"/>
<path d="M981.4 494.2V499.7"/>
<path d="M971 499.7H988.9"/>
<path d="M971 508.8H984.7V518.2"/>
<!-- 之 -->
<path d="M1003 493.2L1005.9 497.2"/>
<path d="M994.5 499.7H1014.4L995 515.8"/>
<path d="M998 513.6Q1000 516.6 1004 516.6H1016.2"/>
<!-- 家 -->
<path d="M1030.6 493.2L1032.2 495.8"/>
<path d="M1021.8 501V498H1042V501"/>
<path d="M1023.8 502H1038.2"/>
<path d="M1038.2 502L1021.8 507.5"/>
<path d="M1031.6 504.5L1021.8 510.7"/>
<path d="M1033.5 507.5L1021.2 516.6"/>
<path d="M1031.6 504Q1033.5 512 1029.6 517.8L1027.8 516.6"/>
<path d="M1039.4 504L1035.5 507"/>
<path d="M1034.5 507Q1038 513 1043.2 516"/>
</g>
</defs>
<!-- bubble back -->
<g>
<path d="M906.1 487.2C897.8 487.2 891.6 492.8 891.6 499.8C891.6 503.8 893.6 507.2 897 509.6L896 515.2L901.2 512.2C902.8 512.6 904.4 512.8 906.1 512.8C914.4 512.8 920.6 507 920.6 499.8C920.6 492.8 914.4 487.2 906.1 487.2Z" fill="#f7f9f7" stroke="#7f8f80" stroke-width="0.55" stroke-opacity="0.7"/>
<circle cx="900.9" cy="495" r="1.15" fill="#8c8c8c"/><circle cx="912.4" cy="495" r="1.15" fill="#8c8c8c"/>
</g>
<g>
<path d="M920.2 498C913 498 907.3 503 907.3 509.3C907.3 515.6 913 520.6 920.2 520.6C921.6 520.6 923 520.4 924.4 520L930.2 522.6L929 518C931.6 516 933.1 512.8 933.1 509.3C933.1 503 927.4 498 920.2 498Z" fill="#f7f9f7" stroke="#5f6f60" stroke-width="0.6" stroke-opacity="0.8"/>
<circle cx="915.6" cy="505.2" r="1.1" fill="#8c8c8c"/><circle cx="925.1" cy="505.2" r="1.1" fill="#8c8c8c"/>
</g>
<use href="#chars" stroke="#4a5a4c" stroke-width="1.8" stroke-opacity="0.6" transform="translate(0.7 0.9)"/>
<use href="#chars" stroke="#ffffff" stroke-width="1.65"/>
</svg>

</body></html>
